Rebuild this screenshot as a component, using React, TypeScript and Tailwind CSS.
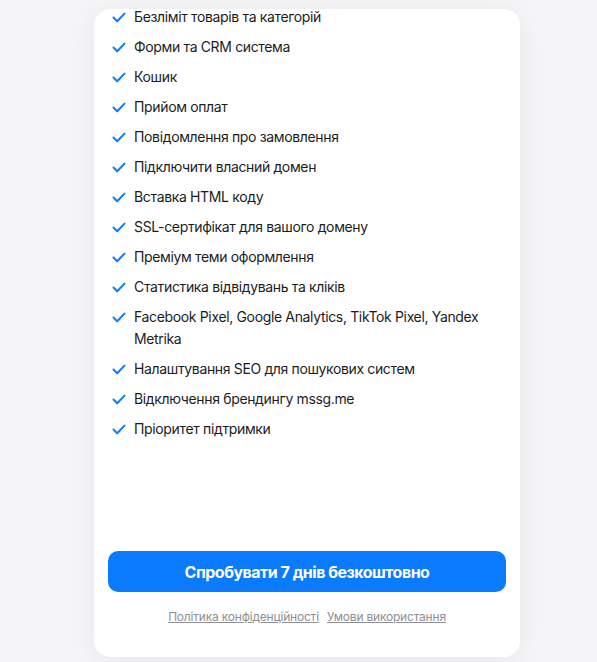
const features = [
  'Безліміт товарів та категорій',
  'Форми та CRM система',
  'Кошик',
  'Прийом оплат',
  'Повідомлення про замовлення',
  'Підключити власний домен',
  'Вставка HTML коду',
  'SSL-сертифікат для вашого домену',
  'Преміум теми оформлення',
  'Статистика відвідувань та кліків',
  'Facebook Pixel, Google Analytics, TikTok Pixel, Yandex Metrika',
  'Налаштування SEO для пошукових систем',
  'Відключення брендингу mssg.me',
  'Пріоритет підтримки',
];

function Check() {
  return (
    <svg width="14" height="11" viewBox="0 0 14 11" fill="none" className="mt-[6px] shrink-0">
      <path d="M1.5 5.5L5.2 9.2L12.5 1.6" stroke="#0a7aff" strokeWidth="2" strokeLinecap="round" strokeLinejoin="round" />
    </svg>
  );
}

export default function App() {
  return (
    <div className="min-h-[662px] w-full bg-[#f5f5f7] pt-[9px] font-['Inter','Noto_Sans',sans-serif]">
      <div className="ml-[94px] flex h-[648px] w-[426px] flex-col overflow-hidden rounded-[16px] bg-white px-[14px] pb-[31px] shadow-[0_4px_30px_rgba(0,0,0,0.06)]">
        {/* Feature list */}
        <ul className="-mt-[3px] flex flex-col gap-[8px] pl-[4px] pr-[20px]">
          {features.map((f) => (
            <li key={f} className="flex gap-[8px] text-[14px] leading-[22px] tracking-[-0.35px] text-[#1c1c1e]">
              <Check />
              <span>{f}</span>
            </li>
          ))}
        </ul>

        <div className="flex-grow"></div>

        <button className="h-[41px] w-full rounded-[10px] bg-[#0a7aff] text-[16px] font-bold tracking-[-0.5px] text-white">
          Спробувати 7 днів безкоштовно
        </button>

        <div className="mt-[16px] flex justify-center gap-[8px] text-[12px] leading-[18px] tracking-[-0.2px] text-[#8e8e93]">
          <a href="#" className="underline">Політика конфіденційності</a>
          <a href="#" className="underline">Умови використання</a>
        </div>
      </div>
    </div>
  );
}
